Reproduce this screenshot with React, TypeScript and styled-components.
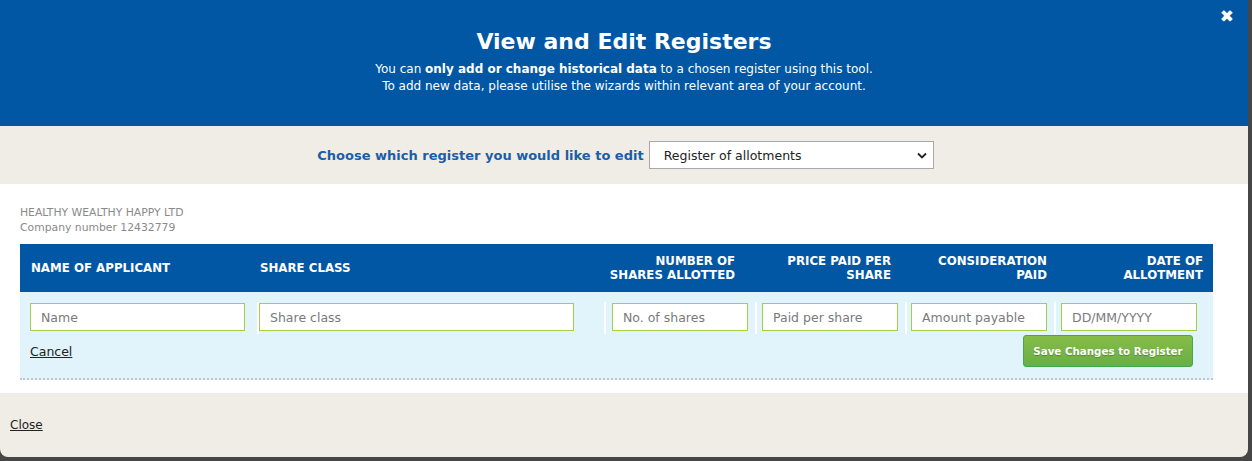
import React from "react";
import styled, { createGlobalStyle } from "styled-components";

const Global = createGlobalStyle`
  html, body { margin: 0; padding: 0; background: #464646; }
  body { font-family: "DejaVu Sans", Verdana, sans-serif; }
  * { box-sizing: border-box; }
`;

const Modal = styled.div`
  width: 1248px;
  height: 457px;
  background: #f0ede6;
  border-radius: 0 0 8px 8px;
  overflow: hidden;
  display: flex;
  flex-direction: column;
`;

const Header = styled.header`
  position: relative;
  height: 126px;
  background: #0157a3;
  color: #fff;
  text-align: center;
  padding-top: 29px;
`;

const Title = styled.h1`
  margin: 0 0 6px;
  font-size: 22px;
  font-weight: bold;
  line-height: 26px;
`;

const Sub = styled.p`
  margin: 0;
  font-size: 12px;
  line-height: 17px;
`;

const CloseX = styled.span`
  position: absolute;
  right: 14px;
  top: 6px;
  font-size: 17px;
  font-weight: bold;
  color: #fff;
`;

const ChooseBar = styled.div`
  height: 58px;
  display: flex;
  align-items: center;
  justify-content: center;
  gap: 5px;
  padding-left: 3px;
`;

const ChooseLabel = styled.label`
  color: #1a5ea8;
  font-weight: bold;
  font-size: 13px;
`;

const Select = styled.div`
  width: 285px;
  height: 28px;
  background: #fff;
  border: 1px solid #a9a9a9;
  display: flex;
  align-items: center;
  justify-content: space-between;
  padding: 0 6px 0 14px;
  font-size: 12.5px;
  color: #222;
`;

const Content = styled.section`
  background: #fff;
  height: 209px;
  padding: 21px 35px 0 20px;
`;

const Company = styled.div`
  color: #8a8a8a;
  font-size: 10.8px;
  line-height: 15px;
  margin-bottom: 9px;
`;

const cols = "237px 347px 151px 150px 149px 159px";

const HeadRow = styled.div`
  display: grid;
  grid-template-columns: ${cols};
  height: 48px;
  background: #0157a3;
  align-items: center;
`;

const HeadCell = styled.div<{ $align: "left" | "right"; $pl?: number; $pr?: number }>`
  color: #fff;
  font-weight: bold;
  font-size: 11.8px;
  line-height: 14px;
  text-transform: uppercase;
  text-align: ${(p) => p.$align};
  padding-left: ${(p) => p.$pl ?? 0}px;
  padding-right: ${(p) => p.$pr ?? 0}px;
`;

const BodyRow = styled.div`
  background: #e1f3fb;
  border-bottom: 2px dotted #c4c4c4;
  padding-top: 10px;
  height: 88px;
`;

const InputGrid = styled.div`
  display: grid;
  grid-template-columns: ${cols};
`;

const Cell = styled.div<{ $sep?: boolean; $pl: number; $pr: number }>`
  border-left: ${(p) => (p.$sep ? "2px solid #fff" : "none")};
  padding: 1px ${(p) => p.$pr}px 3px ${(p) => p.$pl}px;
`;

const Input = styled.input`
  display: block;
  width: 100%;
  height: 28px;
  border: 1px solid #a6cf42;
  background: #fff;
  padding: 0 10px;
  font-family: inherit;
  font-size: 12.5px;
  color: #333;
  outline: none;
  &::placeholder { color: #7a7a7a; }
`;

const Actions = styled.div`
  display: flex;
  justify-content: space-between;
  align-items: center;
  padding: 0 20px 0 10px;
  margin-top: 1px;
`;

const LinkText = styled.a`
  color: #222;
  text-decoration: underline;
  font-size: 12.5px;
  cursor: pointer;
`;

const SaveButton = styled.button`
  height: 32px;
  width: 170px;
  border: 1px solid #3eab4d;
  border-radius: 3px;
  background: linear-gradient(#86bd48, #6aae46);
  color: #fff;
  font-family: inherit;
  font-weight: bold;
  font-size: 10.3px;
  text-shadow: 0 1px 1px rgba(0, 0, 0, 0.25);
  padding: 0;
`;

const Footer = styled.footer`
  flex: 1;
  display: flex;
  align-items: center;
  padding-left: 10px;
`;

const FooterLink = styled(LinkText)`
  font-size: 12px;
`;

const Chevron = () => (
  <svg width="10" height="7" viewBox="0 0 10 7">
    <path d="M1 1.5 L5 5.5 L9 1.5" fill="none" stroke="#222" strokeWidth="1.8" />
  </svg>
);

export default function App() {
  const heads: { t: React.ReactNode; a: "left" | "right"; pl?: number; pr?: number }[] = [
    { t: "Name of applicant", a: "left", pl: 11 },
    { t: "Share class", a: "left", pl: 3 },
    { t: <>Number of<br />shares allotted</>, a: "right", pr: 20 },
    { t: <>Price paid per<br />share</>, a: "right", pr: 14 },
    { t: <>Consideration<br />paid</>, a: "right", pr: 7 },
    { t: <>Date of<br />allotment</>, a: "right", pr: 10 },
  ];
  const inputs = [
    { ph: "Name", pl: 10, pr: 12, sep: false },
    { ph: "Share class", pl: 0, pr: 30, sep: true },
    { ph: "No. of shares", pl: 6, pr: 7, sep: true },
    { ph: "Paid per share", pl: 5, pr: 7, sep: true },
    { ph: "Amount payable", pl: 4, pr: 7, sep: true },
    { ph: "DD/MM/YYYY", pl: 5, pr: 16, sep: true },
  ];
  return (
    <>
      <Global />
      <Modal>
        <Header>
          <CloseX>✖</CloseX>
          <Title>View and Edit Registers</Title>
          <Sub>
            You can <b>only add or change historical data</b> to a chosen register using this tool.
          </Sub>
          <Sub>To add new data, please utilise the wizards within relevant area of your account.</Sub>
        </Header>
        <ChooseBar>
          <ChooseLabel>Choose which register you would like to edit</ChooseLabel>
          <Select>
            <span>Register of allotments</span>
            <Chevron />
          </Select>
        </ChooseBar>
        <Content>
          <Company>
            HEALTHY WEALTHY HAPPY LTD
            <br />
            Company number 12432779
          </Company>
          <HeadRow>
            {heads.map((h, i) => (
              <HeadCell key={i} $align={h.a} $pl={h.pl} $pr={h.pr}>
                {h.t}
              </HeadCell>
            ))}
          </HeadRow>
          <BodyRow>
            <InputGrid>
              {inputs.map((c, i) => (
                <Cell key={i} $sep={c.sep} $pl={c.pl} $pr={c.pr}>
                  <Input placeholder={c.ph} />
                </Cell>
              ))}
            </InputGrid>
            <Actions>
              <LinkText>Cancel</LinkText>
              <SaveButton>Save Changes to Register</SaveButton>
            </Actions>
          </BodyRow>
        </Content>
        <Footer>
          <FooterLink>Close</FooterLink>
        </Footer>
      </Modal>
    </>
  );
}
